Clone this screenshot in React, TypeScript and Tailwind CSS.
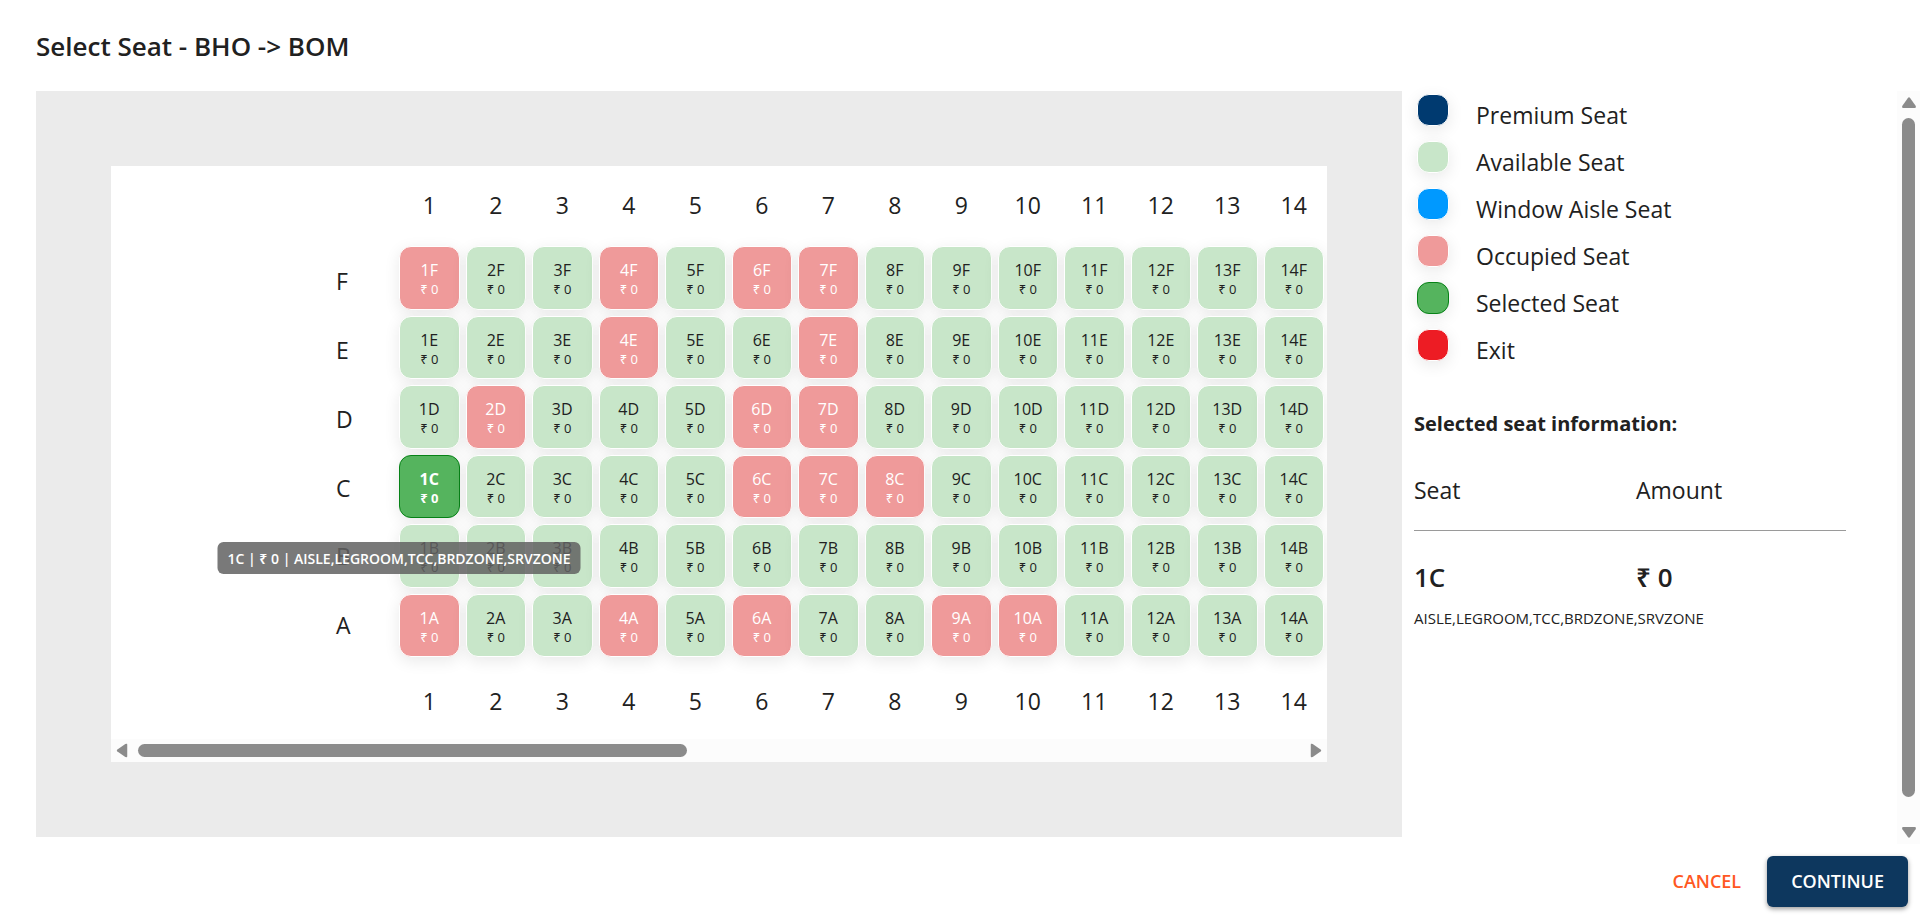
import React from "react";

const columns = [1, 2, 3, 4, 5, 6, 7, 8, 9, 10, 11, 12, 13, 14];
const rows = ["F", "E", "D", "C", "B", "A"];
const occupied = new Set([
  "1F", "4F", "6F", "7F", "4E", "7E", "2D", "6D", "7D",
  "6C", "7C", "8C", "1A", "4A", "6A", "9A", "10A",
]);
const selected = "1C";
const features = "AISLE,LEGROOM,TCC,BRDZONE,SRVZONE";

const legend = [
  { label: "Premium Seat", style: "border-white bg-[#003a70]" },
  { label: "Available Seat", style: "border-white bg-[#c8e6c9]" },
  { label: "Window Aisle Seat", style: "border-white bg-[#0099ff]" },
  { label: "Occupied Seat", style: "border-white bg-[#ef9a9a]" },
  { label: "Selected Seat", style: "border-[#078217] bg-[#55b45e]" },
  { label: "Exit", style: "border-white bg-[#ed1c24]" },
];

const seatShadow = "shadow-[0_4px_16px_rgba(0,0,0,0.09)]";

function Arrow({ className }: { className: string }) {
  return (
    <svg viewBox="0 0 14 11" className={className} aria-hidden="true">
      <path
        d="M5.9 0.9Q7 -0.5 8.1 0.9L13.6 8.8Q14.6 10.9 12.6 11H1.4Q-0.6 10.9 0.4 8.8Z"
        fill="#8b8b8b"
      />
    </svg>
  );
}

function Seat({ id }: { id: string }) {
  const isSelected = id === selected;
  const isOccupied = occupied.has(id);
  const tone = isSelected
    ? "border-[#078217] bg-[#55b45e] font-bold text-white"
    : isOccupied
      ? "border-white bg-[#ef9a9a] text-white"
      : "border-white bg-[#c8e6c9] text-[#212121]";
  return (
    <div className="relative">
      <button
        type="button"
        disabled={isOccupied}
        aria-pressed={isSelected}
        className={`flex h-full w-full flex-col items-center justify-center rounded-xl border pt-[3px] ${seatShadow} ${tone}`}
      >
        <span className="text-[16px] leading-5">{id}</span>
        <span className="text-[13px] leading-[18px]">₹ 0</span>
      </button>
      {isSelected && (
        <div
          role="tooltip"
          className="absolute top-full left-0 z-10 mt-6 flex h-8 -translate-x-1/2 items-center rounded-md bg-[#616161]/85 px-[10px] text-[14px] font-semibold whitespace-nowrap text-white"
        >
          {id} | ₹ 0 | {features}
        </div>
      )}
    </div>
  );
}

function ColumnNumbers({ className }: { className: string }) {
  return (
    <div className={`flex items-center pr-[3px] pl-72 ${className}`}>
      <div className="grid flex-1 grid-cols-14 gap-x-[6px] text-center text-[23px] leading-8">
        {columns.map((c) => (
          <span key={c}>{c}</span>
        ))}
      </div>
    </div>
  );
}

function SeatMap() {
  return (
    <section aria-label="Seat map" className="min-w-0 flex-1 bg-[#ebebeb] p-[75px]">
      <div className="overflow-hidden bg-white">
        <ColumnNumbers className="h-20 pb-[3px]" />
        <div className="flex pr-[3px]">
          <div className="grid h-[411px] w-72 shrink-0 grid-rows-6 gap-y-[6px] pt-1 pl-[225px] text-[23px]">
            {rows.map((r) => (
              <span key={r} className="flex items-center">{r}</span>
            ))}
          </div>
          <div className="grid h-[411px] flex-1 grid-cols-14 grid-rows-6 gap-[6px]">
            {rows.map((r) => columns.map((c) => <Seat key={`${c}${r}`} id={`${c}${r}`} />))}
          </div>
        </div>
        <ColumnNumbers className="h-[82px] pt-[5px]" />
        <div className="flex h-[23px] items-center bg-[#fcfcfc] px-1">
          <button type="button" aria-label="Scroll left" className="flex w-[23px] shrink-0">
            <Arrow className="h-[11px] w-[14px] -rotate-90" />
          </button>
          <div className="flex-1">
            <div className="h-[13px] w-[549px] max-w-full rounded-full bg-[#8b8b8b]" />
          </div>
          <button type="button" aria-label="Scroll right" className="flex w-[23px] shrink-0 justify-end">
            <Arrow className="h-[11px] w-[14px] rotate-90" />
          </button>
        </div>
      </div>
    </section>
  );
}

function Details() {
  return (
    <aside className="w-[495px] shrink-0 pl-3">
      <ul>
        {legend.map((item) => (
          <li key={item.label} className="flex h-[47px] items-start pt-[3px] pl-[3px]">
            <span className={`h-8 w-8 rounded-xl border ${seatShadow} ${item.style}`} />
            <span className="pl-[27px] text-[23px] leading-[42px]">{item.label}</span>
          </li>
        ))}
      </ul>
      <h2 className="pt-[35px] text-[20px] leading-8 font-bold">Selected seat information:</h2>
      <table className="mt-[28px] w-[432px] table-fixed text-left">
        <thead>
          <tr className="h-[62px] border-b border-[#9a9a9a] align-top text-[23px] leading-[44px]">
            <th className="w-[222px] font-normal">Seat</th>
            <th className="font-normal">Amount</th>
          </tr>
        </thead>
        <tbody>
          <tr className="align-top text-[26px] leading-8 font-semibold">
            <td className="pt-[30px]">1C</td>
            <td className="pt-[30px]">₹ 0</td>
          </tr>
          <tr>
            <td colSpan={2} className="pt-[13px] text-[15px] leading-6">{features}</td>
          </tr>
        </tbody>
      </table>
    </aside>
  );
}

export default function App() {
  return (
    <div
      role="dialog"
      aria-labelledby="dialog-title"
      className="bg-white font-['Open_Sans','Noto_Sans',sans-serif] text-[#212121]"
    >
      <header className="flex h-[91px] items-center pt-0.5 pl-9">
        <h1 id="dialog-title" className="text-[26px] font-semibold">Select Seat - BHO -&gt; BOM</h1>
      </header>
      <main className="flex pl-9">
        <div className="flex min-w-0 flex-1 pb-[7px]">
          <SeatMap />
          <Details />
        </div>
        <div className="flex w-[23px] shrink-0 flex-col items-center bg-[#fcfcfc] py-[6px]">
          <button type="button" aria-label="Scroll up" className="flex h-[21px] items-start">
            <Arrow className="h-[11px] w-[14px]" />
          </button>
          <div className="flex-1">
            <div className="h-[679px] w-[13px] rounded-full bg-[#8b8b8b]" />
          </div>
          <button type="button" aria-label="Scroll down">
            <Arrow className="h-[11px] w-[14px] rotate-180" />
          </button>
        </div>
      </main>
      <footer className="flex items-center justify-end gap-[26px] p-3">
        <button type="button" className="text-[18px] font-semibold text-[#ff5722]">CANCEL</button>
        <button
          type="button"
          className="h-[51px] rounded-md bg-[#0d375e] px-6 text-[18px] font-semibold text-white shadow-[0_2px_5px_rgba(0,0,0,0.4)]"
        >
          CONTINUE
        </button>
      </footer>
    </div>
  );
}
